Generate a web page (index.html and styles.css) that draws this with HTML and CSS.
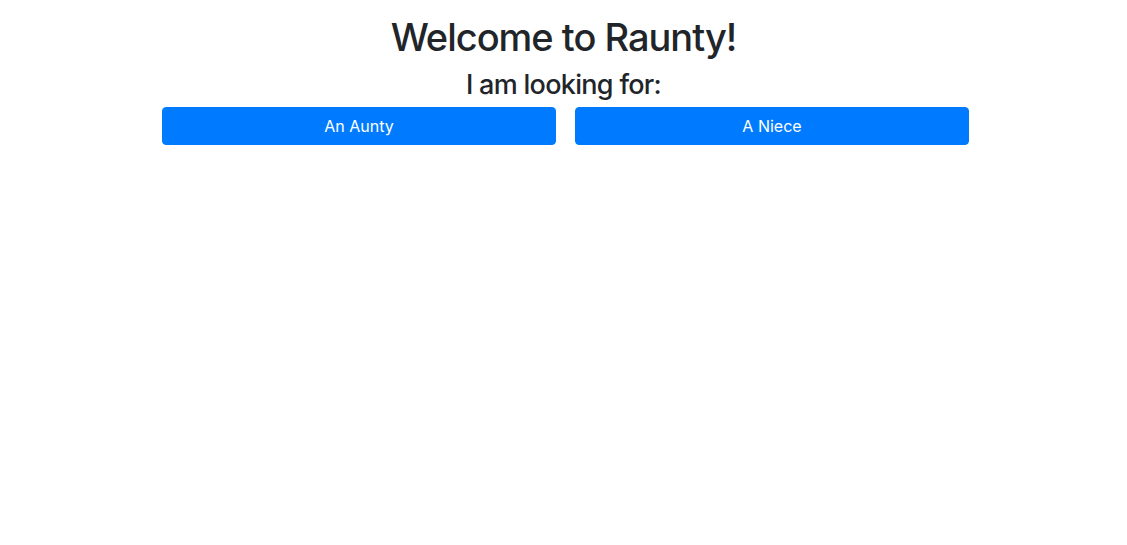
FILE: index.html
```html
<!DOCTYPE html>
<html lang="en">
<head>
<meta charset="utf-8">
<title>Raunty</title>
<link rel="stylesheet" href="styles.css">
</head>
<body>
<main class="page">
  <h1 class="title">Welcome to Raunty!</h1>
  <h3 class="subtitle">I am looking for:</h3>
  <div class="choices">
    <button class="btn">An Aunty</button>
    <button class="btn">A Niece</button>
  </div>
</main>
</body>
</html>
```
FILE: styles.css
```css
html, body {
  margin: 0;
  padding: 0;
  background: #fff;
}
body {
  font-family: Inter, "Noto Sans", "Liberation Sans", sans-serif;
  color: #212529;
}
.page {
  padding-top: 14px;
  text-align: center;
}
.title {
  margin: 0 0 9px;
  font-size: 38px;
  font-weight: 500;
  line-height: 46px;
  letter-spacing: -1px;
}
.subtitle {
  margin: 0 0 6px;
  font-size: 27px;
  font-weight: 500;
  line-height: 32px;
  letter-spacing: -0.7px;
}
.choices {
  display: flex;
  gap: 19px;
  width: 807px;
  margin-left: calc(50% - 401.5px);
}
.btn {
  flex: 1;
  height: 38px;
  border: 1px solid #007bff;
  border-radius: 4px;
  background: #007bff;
  color: #fff;
  font-family: inherit;
  font-size: 16px;
  font-weight: 400;
  line-height: 24px;
  cursor: pointer;
}
```
